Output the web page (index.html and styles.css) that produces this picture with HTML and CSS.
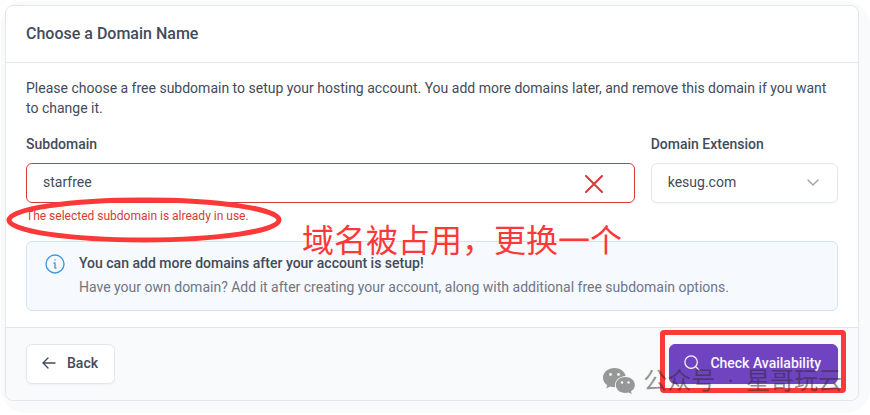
FILE: index.html
```html
<!DOCTYPE html>
<html lang="en">
<head>
    <meta charset="UTF-8">
    <meta name="viewport" content="width=device-width, initial-scale=1.0">
    <title>Choose a Domain Name</title>
    <link rel="stylesheet" href="styles.css">
</head>
<body>
    <main class="page">
        <form class="card">
            <div class="card-header">
                <h1>Choose a Domain Name</h1>
            </div>
            <div class="card-body">
                <p class="intro">Please choose a free subdomain to setup your hosting account. You add more domains later, and remove this domain if you want to change it.</p>
                <div class="fields">
                    <div class="field">
                        <label for="subdomain">Subdomain</label>
                        <div class="control">
                            <input type="text" id="subdomain" class="invalid" value="starfree" aria-describedby="feedback">
                            <svg class="cross" viewBox="0 0 18 18" aria-hidden="true"><path d="M1 1l16 16M17 1L1 17"/></svg>
                        </div>
                        <div class="feedback" id="feedback">
                            The selected subdomain is already in use.
                            <svg class="ellipse" viewBox="0 0 276 46" aria-hidden="true"><ellipse cx="138" cy="23" rx="135" ry="20"/></svg>
                        </div>
                    </div>
                    <div class="field">
                        <label for="extension">Domain Extension</label>
                        <div class="control">
                            <select id="extension">
                                <option>kesug.com</option>
                            </select>
                            <svg class="chevron" viewBox="0 0 12 8" aria-hidden="true"><path d="M1 1l5 5 5-5"/></svg>
                        </div>
                    </div>
                </div>
                <div class="alert">
                    <svg class="info" viewBox="0 0 20 20" aria-hidden="true"><circle cx="10" cy="10" r="9"/><path d="M10 6h.01M9 9h1v5h1"/></svg>
                    <div>
                        <h2>You can add more domains after your account is setup!</h2>
                        <p>Have your own domain? Add it after creating your account, along with additional free subdomain options.</p>
                    </div>
                    <span class="note" lang="zh-CN">域名被占用，更换一个</span>
                </div>
            </div>
            <div class="card-footer">
                <button type="button" class="btn">
                    <svg class="arrow" viewBox="0 0 14 12" aria-hidden="true"><path d="M13 6H1M6 1L1 6l5 5"/></svg>
                    Back
                </button>
                <div class="submit">
                    <button type="submit" class="btn btn-primary">
                        <svg class="search" viewBox="0 0 18 18" aria-hidden="true"><circle cx="8" cy="8" r="7"/><path d="M13 13l4 4"/></svg>
                        Check Availability
                    </button>
                    <span class="frame"></span>
                    <div class="watermark" lang="zh-CN">
                        <svg viewBox="0 0 32 26" aria-hidden="true">
                            <path d="M11.500 0C5 0 0 4.300 0 9.700c0 3 1.600 5.600 4.200 7.400L3.200 20.500l3.900-2c1.400.5 3 .7 5 .7C11 13 16 8.200 22.700 8C21.700 3.300 17 0 11.500 0z"/>
                            <path d="M22.300 9C17 9 12.800 12.500 12.800 17c0 4.400 4.200 8 9.500 8 1.200 0 2.300-.2 3.300-.5l3.200 1.500-.8-2.800c2.400-1.500 3.900-3.700 3.900-6.200C31.900 12.500 27.600 9 22.300 9z"/>
                            <g class="eyes"><circle cx="7.500" cy="6.500" r="1.400"/><circle cx="15.500" cy="6.500" r="1.400"/><circle cx="19" cy="14.500" r="1.200"/><circle cx="25.500" cy="14.500" r="1.200"/></g>
                        </svg>
                        <span>公众号&ensp;·&ensp;星哥玩云</span>
                    </div>
                </div>
            </div>
        </form>
    </main>
</body>
</html>
```
FILE: styles.css
```css
* {
    margin: 0;
    padding: 0;
    box-sizing: border-box;
}
body {
    font-family: Roboto, "Noto Sans CJK SC", sans-serif;
    font-size: 14px;
    line-height: 20px;
    color: #424b5a;
    background: #fff;
}
svg {
    flex-shrink: 0;
    fill: none;
    stroke: currentColor;
    stroke-linecap: round;
    stroke-linejoin: round;
}
.page {
    margin: 1px 0 0 1px;
    padding: 4px 11px 12px 4px;
    background: #f8fafc;
    border-radius: 24px;
}
.card {
    background: #fff;
    border: 1px solid #e3e6eb;
    border-radius: 8px;
}
.card-header {
    padding: 16px 20px;
    border-bottom: 1px solid #e3e6eb;
}
h1 {
    font-size: 16px;
    line-height: 24px;
    font-weight: 500;
}
.card-body {
    padding: 15px 20px 16px;
}
.intro {
    margin-bottom: 16px;
}
.fields {
    display: grid;
    grid-template-columns: 13fr 4fr;
    gap: 16px;
    margin-bottom: 16px;
}
label {
    display: block;
    margin-bottom: 9px;
    font-weight: 500;
}
.control {
    position: relative;
}
input,
select {
    display: block;
    width: 100%;
    height: 40px;
    padding: 0 16px 2px;
    font: inherit;
    color: inherit;
    background: #fff;
    border: 1px solid #e3e6eb;
    border-radius: 6px;
    appearance: none;
}
select {
    box-shadow: 0 1px 2px rgba(30, 41, 59, 0.04);
}
.invalid {
    border-color: #d63939;
}
.cross {
    position: absolute;
    top: 12px;
    right: 32px;
    width: 18px;
    height: 18px;
    color: #d63939;
    stroke-width: 2;
}
.chevron {
    position: absolute;
    top: 16px;
    right: 19px;
    width: 12px;
    height: 8px;
    color: #9aa2b0;
    stroke-width: 1.4;
}
.feedback {
    position: relative;
    margin-top: 4px;
    font-size: 12px;
    line-height: 18px;
    color: #d63939;
}
.ellipse {
    position: absolute;
    top: -10px;
    left: -20px;
    width: 276px;
    height: 46px;
    overflow: visible;
    color: #fb3938;
    stroke-width: 5;
    z-index: 1;
}
.alert {
    position: relative;
    display: flex;
    gap: 14px;
    padding: 11px 18px 13px;
    background: #f6f9fe;
    border: 1px solid #d0e4f6;
    border-radius: 6px;
}
.info {
    width: 20px;
    height: 20px;
    margin-top: 1px;
    color: #4299e1;
    stroke-width: 1.4;
}
.alert h2 {
    margin-bottom: 4px;
    font-size: 14px;
    line-height: 20px;
    font-weight: 500;
}
.alert p {
    color: #6f7683;
}
.note {
    position: absolute;
    top: -21px;
    left: 275px;
    font-size: 32px;
    line-height: 40px;
    white-space: nowrap;
    color: #fb3938;
}
.card-footer {
    display: flex;
    justify-content: space-between;
    padding: 16px 20px;
    background: #f8fafc;
    border-top: 1px solid #e3e6eb;
    border-radius: 0 0 8px 8px;
}
.btn {
    display: flex;
    align-items: center;
    height: 40px;
    gap: 11px;
    padding: 0 16px 2px 15px;
    font: inherit;
    font-weight: 500;
    color: inherit;
    background: #fff;
    border: 1px solid #e3e6eb;
    border-radius: 6px;
    box-shadow: 0 1px 2px rgba(30, 41, 59, 0.04);
}
.btn-primary {
    gap: 10px;
    padding-left: 14px;
    color: #f8f5ff;
    background: #7044c0;
    border-color: #7044c0;
}
.arrow {
    width: 14px;
    height: 12px;
    stroke-width: 1.4;
}
.search {
    width: 16px;
    height: 16px;
    stroke-width: 1.4;
}
.submit {
    position: relative;
}
.frame {
    position: absolute;
    top: -14px;
    right: -8px;
    bottom: -9px;
    left: -9px;
    border: 5px solid #fb3938;
    border-radius: 4px;
}
.watermark {
    position: absolute;
    top: 21px;
    right: -4px;
    display: flex;
    align-items: center;
    gap: 8px;
    font-size: 24px;
    line-height: 32px;
    white-space: nowrap;
    color: rgba(40, 40, 40, 0.5);
}
.watermark svg {
    width: 32px;
    height: 26px;
    fill: #969897;
    stroke: none;
}
.watermark .eyes {
    fill: #f8fafc;
}
```
